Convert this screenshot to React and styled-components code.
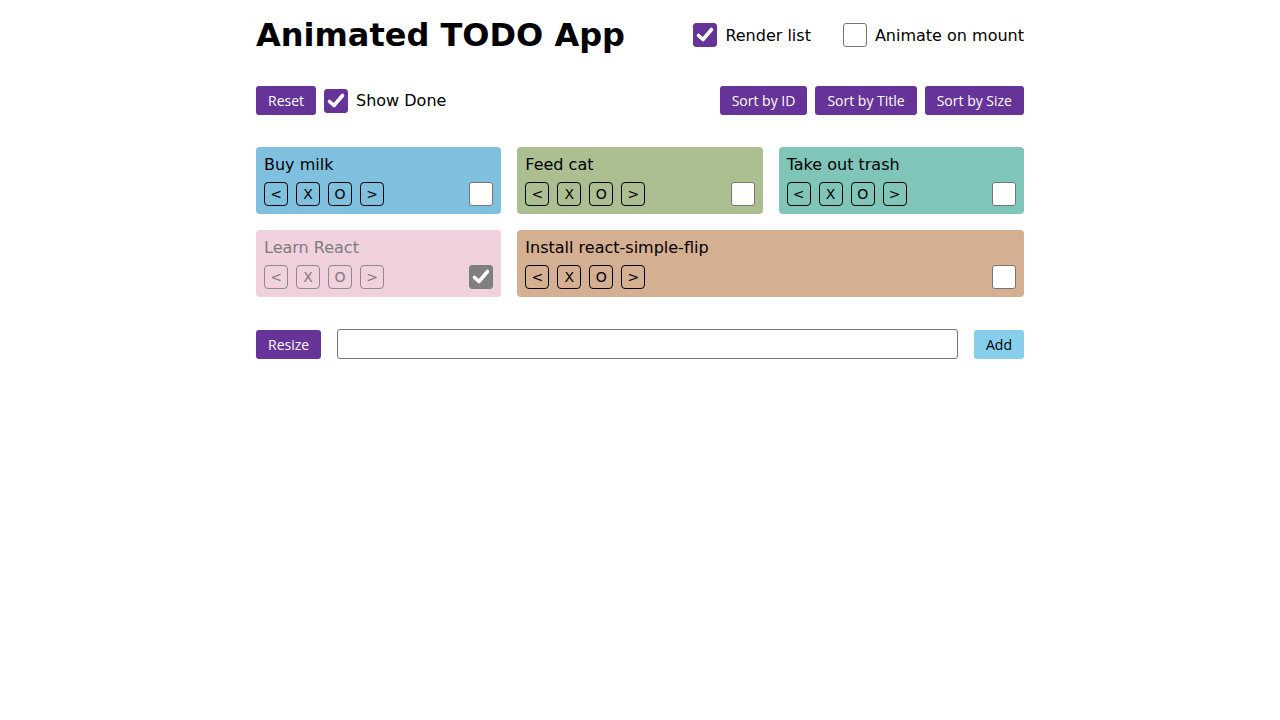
import React, { useState } from "react";
import styled, { createGlobalStyle } from "styled-components";

const GlobalStyle = createGlobalStyle`
  body {
    margin: 0;
    background: #fff;
    font-family: "DejaVu Sans", sans-serif;
    color: #000;
  }
`;

const Page = styled.div`
  width: 768px;
  margin: 0 auto;
  padding-top: 15px;
`;

const Header = styled.div`
  display: flex;
  align-items: center;
  justify-content: space-between;
  height: 40px;
`;

const Title = styled.h1`
  margin: 0;
  font-size: 32px;
  font-weight: bold;
  font-family: "DejaVu Sans", sans-serif;
`;

const Toggles = styled.div`
  display: flex;
  align-items: center;
  gap: 32px;
`;

const Label = styled.label`
  display: flex;
  align-items: center;
  gap: 8px;
  font-size: 16px;
  cursor: pointer;
`;

const Box = styled.span`
  width: 24px;
  height: 24px;
  box-sizing: border-box;
  border-radius: 3px;
  display: inline-flex;
  align-items: center;
  justify-content: center;
  flex-shrink: 0;
  background: ${(p) => (p.$checked ? p.$tone : "#fff")};
  border: 1px solid ${(p) => (p.$checked ? p.$tone : "#767676")};
`;

const Controls = styled.div`
  display: flex;
  align-items: center;
  justify-content: space-between;
  margin-top: 31px;
  height: 29px;
`;

const Group = styled.div`
  display: flex;
  align-items: center;
  gap: 8px;
`;

const Button = styled.button`
  height: 29px;
  padding: 0 12px;
  border: none;
  border-radius: 3px;
  background: ${(p) => (p.$light ? "#87ceeb" : "#663399")};
  color: ${(p) => (p.$light ? "#000" : "#fff")};
  font-family: "Open Sans", sans-serif;
  font-size: 14px;
  cursor: pointer;
`;

const Grid = styled.div`
  display: grid;
  grid-template-columns: repeat(3, 1fr);
  gap: 16px;
  margin-top: 32px;
`;

const Card = styled.div`
  grid-column: span ${(p) => p.$span};
  background: ${(p) => p.$bg};
  border-radius: 4px;
  padding: 8px;
  color: ${(p) => (p.$done ? "#7d7d7d" : "#000")};
`;

const CardTitle = styled.div`
  font-size: 16px;
  line-height: 20px;
`;

const CardActions = styled.div`
  display: flex;
  align-items: center;
  justify-content: space-between;
  margin-top: 7px;
`;

const SmallButton = styled.button`
  width: 24px;
  height: 24px;
  padding: 0;
  box-sizing: border-box;
  border: 1px solid ${(p) => (p.$done ? "#8a8a8a" : "#000")};
  border-radius: 4px;
  background: transparent;
  color: inherit;
  font-family: "DejaVu Sans", sans-serif;
  font-size: 14px;
  line-height: 22px;
  cursor: pointer;
`;

const Footer = styled.div`
  display: flex;
  align-items: center;
  gap: 16px;
  margin-top: 32px;
  height: 30px;
`;

const Input = styled.input`
  flex: 1;
  height: 30px;
  box-sizing: border-box;
  border: 1px solid #767676;
  border-radius: 3px;
  font-family: "DejaVu Sans", sans-serif;
  font-size: 14px;
  padding: 0 6px;
`;

const Check = () => (
  <svg width="20" height="20" viewBox="0 0 20 20">
    <path d="M3.5 10.5 L8 14.5 L16.5 4.5" fill="none" stroke="#fff" strokeWidth="3.6" strokeLinecap="round" strokeLinejoin="round" />
  </svg>
);

const CheckBox = ({ checked, tone = "#663399", onClick }) => (
  <Box $checked={checked} $tone={tone} onClick={onClick}>
    {checked && <Check />}
  </Box>
);

const initialTodos = [
  { id: 1, title: "Buy milk", color: "#7fc0df", done: false, span: 1 },
  { id: 2, title: "Feed cat", color: "#abbf91", done: false, span: 1 },
  { id: 3, title: "Take out trash", color: "#7fc5b9", done: false, span: 1 },
  { id: 4, title: "Learn React", color: "#f0d1dd", done: true, span: 1 },
  { id: 5, title: "Install react-simple-flip", color: "#d4af92", done: false, span: 2 },
];

export default function App() {
  const [renderList, setRenderList] = useState(true);
  const [animateMount, setAnimateMount] = useState(false);
  const [showDone, setShowDone] = useState(true);
  const [todos, setTodos] = useState(initialTodos);

  const toggleDone = (id) =>
    setTodos((prev) => prev.map((t) => (t.id === id ? { ...t, done: !t.done } : t)));

  return (
    <Page>
      <GlobalStyle />
      <Header>
        <Title>Animated TODO App</Title>
        <Toggles>
          <Label onClick={() => setRenderList(!renderList)}>
            <CheckBox checked={renderList} />
            Render list
          </Label>
          <Label onClick={() => setAnimateMount(!animateMount)}>
            <CheckBox checked={animateMount} />
            Animate on mount
          </Label>
        </Toggles>
      </Header>

      <Controls>
        <Group>
          <Button onClick={() => setTodos(initialTodos)}>Reset</Button>
          <Label onClick={() => setShowDone(!showDone)}>
            <CheckBox checked={showDone} />
            Show Done
          </Label>
        </Group>
        <Group>
          <Button>Sort by ID</Button>
          <Button>Sort by Title</Button>
          <Button>Sort by Size</Button>
        </Group>
      </Controls>

      {renderList && (
        <Grid>
          {todos
            .filter((t) => showDone || !t.done)
            .map((todo) => (
              <Card key={todo.id} $bg={todo.color} $span={todo.span} $done={todo.done}>
                <CardTitle>{todo.title}</CardTitle>
                <CardActions>
                  <Group>
                    <SmallButton $done={todo.done}>&lt;</SmallButton>
                    <SmallButton $done={todo.done}>X</SmallButton>
                    <SmallButton $done={todo.done}>O</SmallButton>
                    <SmallButton $done={todo.done}>&gt;</SmallButton>
                  </Group>
                  <CheckBox checked={todo.done} tone="#7f7f7f" onClick={() => toggleDone(todo.id)} />
                </CardActions>
              </Card>
            ))}
        </Grid>
      )}

      <Footer>
        <Button>Resize</Button>
        <Input type="text" />
        <Button $light>Add</Button>
      </Footer>
    </Page>
  );
}
